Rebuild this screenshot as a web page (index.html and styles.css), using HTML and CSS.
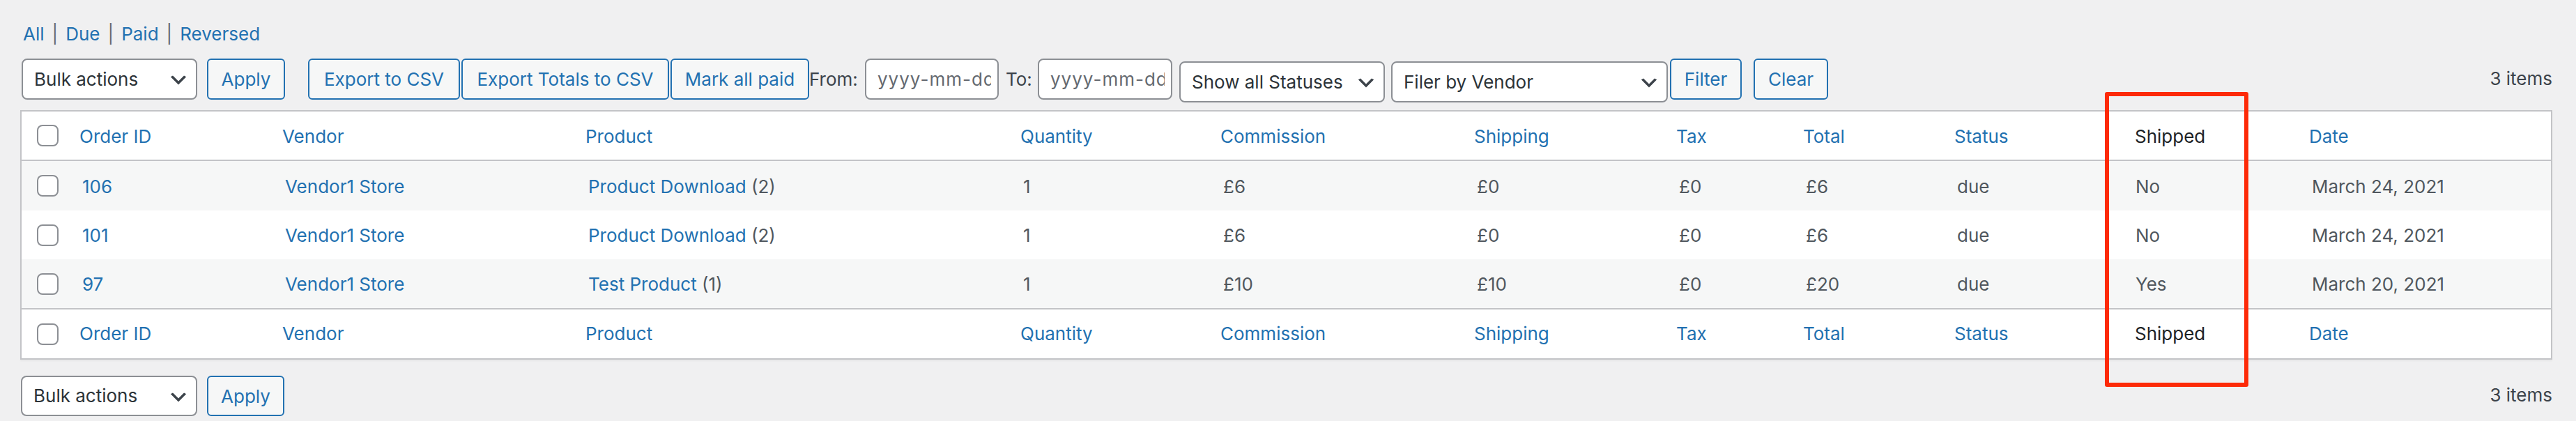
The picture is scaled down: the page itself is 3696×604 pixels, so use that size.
FILE: index.html
```html
<!DOCTYPE html>
<html lang="en">
<head>
<meta charset="utf-8">
<title>Commissions</title>
<link rel="stylesheet" href="styles.css">
</head>
<body>
<div class="wrap">
  <ul class="subsubsub">
    <li><a href="#">All</a></li>
    <li class="sep">|</li>
    <li><a href="#">Due</a></li>
    <li class="sep">|</li>
    <li><a href="#">Paid</a></li>
    <li class="sep">|</li>
    <li><a href="#">Reversed</a></li>
  </ul>

  <div class="tablenav top">
    <div class="select bulk"><span>Bulk actions</span><svg class="chev" viewBox="0 0 20 20"><path d="M5 6l5 5 5-5 2 1-7 7-7-7 2-1z"/></svg></div>
    <button class="btn apply">Apply</button>
    <button class="btn export">Export to CSV</button>
    <button class="btn export-totals">Export Totals to CSV</button>
    <button class="btn mark-paid">Mark all paid</button>
    <label class="lbl from">From:</label>
    <input class="date from-date" type="text" placeholder="yyyy-mm-dd">
    <label class="lbl to">To:</label>
    <input class="date to-date" type="text" placeholder="yyyy-mm-dd">
    <div class="select status"><span>Show all Statuses</span><svg class="chev" viewBox="0 0 20 20"><path d="M5 6l5 5 5-5 2 1-7 7-7-7 2-1z"/></svg></div>
    <div class="select vendor"><span>Filer by Vendor</span><svg class="chev" viewBox="0 0 20 20"><path d="M5 6l5 5 5-5 2 1-7 7-7-7 2-1z"/></svg></div>
    <button class="btn filter">Filter</button>
    <button class="btn clear">Clear</button>
    <div class="count">3 items</div>
  </div>

  <table class="list">
    <thead>
      <tr>
        <th class="cb"><span class="checkbox"></span></th>
        <th class="c-order sortable"><a href="#">Order ID</a></th>
        <th class="c-vendor sortable"><a href="#">Vendor</a></th>
        <th class="c-product sortable"><a href="#">Product</a></th>
        <th class="c-qty sortable"><a href="#">Quantity</a></th>
        <th class="c-comm sortable"><a href="#">Commission</a></th>
        <th class="c-ship sortable"><a href="#">Shipping</a></th>
        <th class="c-tax sortable"><a href="#">Tax</a></th>
        <th class="c-total sortable"><a href="#">Total</a></th>
        <th class="c-status sortable"><a href="#">Status</a></th>
        <th class="c-shipped">Shipped</th>
        <th class="c-date sortable"><a href="#">Date</a></th>
      </tr>
    </thead>
    <tbody>
      <tr>
        <td class="cb"><span class="checkbox"></span></td>
        <td><a href="#">106</a></td>
        <td><a href="#">Vendor1 Store</a></td>
        <td><a href="#">Product Download</a> (2)</td>
        <td>1</td>
        <td>£6</td>
        <td>£0</td>
        <td>£0</td>
        <td>£6</td>
        <td>due</td>
        <td>No</td>
        <td>March 24, 2021</td>
      </tr>
      <tr>
        <td class="cb"><span class="checkbox"></span></td>
        <td><a href="#">101</a></td>
        <td><a href="#">Vendor1 Store</a></td>
        <td><a href="#">Product Download</a> (2)</td>
        <td>1</td>
        <td>£6</td>
        <td>£0</td>
        <td>£0</td>
        <td>£6</td>
        <td>due</td>
        <td>No</td>
        <td>March 24, 2021</td>
      </tr>
      <tr>
        <td class="cb"><span class="checkbox"></span></td>
        <td><a href="#">97</a></td>
        <td><a href="#">Vendor1 Store</a></td>
        <td><a href="#">Test Product</a> (1)</td>
        <td>1</td>
        <td>£10</td>
        <td>£10</td>
        <td>£0</td>
        <td>£20</td>
        <td>due</td>
        <td>Yes</td>
        <td>March 20, 2021</td>
      </tr>
    </tbody>
    <tfoot>
      <tr>
        <th class="cb"><span class="checkbox"></span></th>
        <th class="sortable"><a href="#">Order ID</a></th>
        <th class="sortable"><a href="#">Vendor</a></th>
        <th class="sortable"><a href="#">Product</a></th>
        <th class="sortable"><a href="#">Quantity</a></th>
        <th class="sortable"><a href="#">Commission</a></th>
        <th class="sortable"><a href="#">Shipping</a></th>
        <th class="sortable"><a href="#">Tax</a></th>
        <th class="sortable"><a href="#">Total</a></th>
        <th class="sortable"><a href="#">Status</a></th>
        <th class="c-shipped">Shipped</th>
        <th class="sortable"><a href="#">Date</a></th>
      </tr>
    </tfoot>
  </table>

  <div class="tablenav bottom">
    <div class="select bulk"><span>Bulk actions</span><svg class="chev" viewBox="0 0 20 20"><path d="M5 6l5 5 5-5 2 1-7 7-7-7 2-1z"/></svg></div>
    <button class="btn apply">Apply</button>
    <div class="count">3 items</div>
  </div>

  <div class="annotation"></div>
</div>
</body>
</html>
```

FILE: styles.css
```css
* { box-sizing: border-box; }

html, body {
  margin: 0;
  padding: 0;
  background: #f0f0f1;
}

body {
  font-family: "Inter", "Noto Sans", "Liberation Sans", sans-serif;
  font-size: 26px;
  line-height: 36px;
  color: #3c434a;
}

a { color: #2271b1; text-decoration: none; }

.wrap {
  position: relative;
  padding: 31px 34px 0 29px;
  min-height: 604px;
}

/* status links */
.subsubsub {
  list-style: none;
  margin: 0;
  padding: 0 0 0 4px;
  display: flex;
  gap: 11px;
  height: 36px;
}
.subsubsub .sep { color: #646970; }

/* tablenav */
.tablenav {
  display: flex;
  align-items: flex-start;
  padding-left: 2px;
}
.tablenav.top { margin-top: 17px; height: 64px; }
.tablenav.bottom { margin-top: 23px; height: 60px; padding-left: 1px; }

.select {
  height: 59px;
  background: #fff;
  border: 2px solid #8c8f94;
  border-radius: 8px;
  display: flex;
  align-items: center;
  padding: 0 9px 0 16px;
  color: #2c3338;
  white-space: nowrap;
}
.select span { flex: 1; }
.chev { width: 32px; height: 32px; fill: #3c434a; margin-top: 3px; flex: none; }

.select.bulk { width: 252px; }
.select.status { width: 295px; margin: 4px 0 0 10px; }
.select.vendor { width: 397px; margin: 4px 0 0 9px; }
.tablenav.bottom .select.bulk { height: 58px; width: 253px; }

.btn {
  height: 59px;
  font: inherit;
  line-height: 55px;
  color: #2271b1;
  background: #f6f7f7;
  border: 2px solid #2271b1;
  border-radius: 6px;
  padding: 0;
  text-align: center;
  white-space: nowrap;
}
.btn.apply { width: 112px; margin-left: 14px; }
.tablenav.bottom .btn.apply { height: 58px; width: 111px; margin-left: 14px; }
.btn.export { width: 218px; margin-left: 33px; }
.btn.export-totals { width: 298px; margin-left: 2px; }
.btn.mark-paid { width: 199px; margin-left: 2px; }
.btn.filter { width: 103px; margin-left: 3px; }
.btn.clear { width: 107px; margin-left: 17px; }

.lbl {
  height: 59px;
  line-height: 59px;
  color: #3c434a;
  white-space: nowrap;
}
.lbl.from { width: 80px; }
.lbl.to { width: 56px; padding-left: 10px; }

.date {
  height: 59px;
  font: inherit;
  letter-spacing: 1px;
  color: #2c3338;
  background: #fff;
  border: 2px solid #8c8f94;
  border-radius: 8px;
  padding: 0 9px 0 16px;
  outline: none;
}
.date::placeholder { color: #646970; }
.from-date { width: 192px; }
.to-date { width: 193px; }

.count {
  margin-left: auto;
  margin-top: 11px;
  color: #3c434a;
  white-space: nowrap;
}
.tablenav.bottom .count { margin-top: 10px; }

/* table */
.list {
  width: 3633px;
  margin-top: 10px;
  table-layout: fixed;
  border-collapse: separate;
  border-spacing: 0;
  background: #fff;
  border: 2px solid #c3c4c7;
  box-shadow: 0 2px 2px rgba(0, 0, 0, 0.04);
}

.list th, .list td {
  text-align: left;
  font-weight: 400;
  padding: 0 20px;
  vertical-align: middle;
  white-space: nowrap;
  overflow: hidden;
}
.list th.sortable { padding-left: 16px; }
.list th.c-shipped { padding-left: 19px; color: #1d2327; }

.list thead th { height: 71px; padding-top: 2px; border-bottom: 2px solid #c3c4c7; }
.list tfoot th { height: 72px; border-top: 2px solid #c3c4c7; }
.list tbody td { height: 70px; padding-top: 2px; color: #50575e; }
.list tbody tr:first-child td { height: 71px; }
.list tbody tr:nth-child(odd) td { background: #f6f7f7; }

.list .cb { width: 67px; padding: 0 0 0 22px; }
.list thead .cb, .list tbody .cb { padding-top: 0; }
.c-order { width: 291px; }
.c-vendor { width: 435px; }
.c-product { width: 624px; }
.c-qty { width: 287px; }
.c-comm { width: 364px; }
.c-ship { width: 290px; }
.c-tax { width: 182px; }
.c-total { width: 217px; }
.c-status { width: 256px; }
.c-shipped { width: 253px; }
.c-date { width: 363px; }

.checkbox {
  display: block;
  width: 31px;
  height: 31px;
  background: #fff;
  border: 2px solid #8c8f94;
  border-radius: 8px;
}

/* screenshot annotation overlay */
.annotation {
  position: absolute;
  left: 3020px;
  top: 132px;
  width: 206px;
  height: 423px;
  border: 6px solid #fd2a08;
  border-radius: 3px;
  pointer-events: none;
}
```
